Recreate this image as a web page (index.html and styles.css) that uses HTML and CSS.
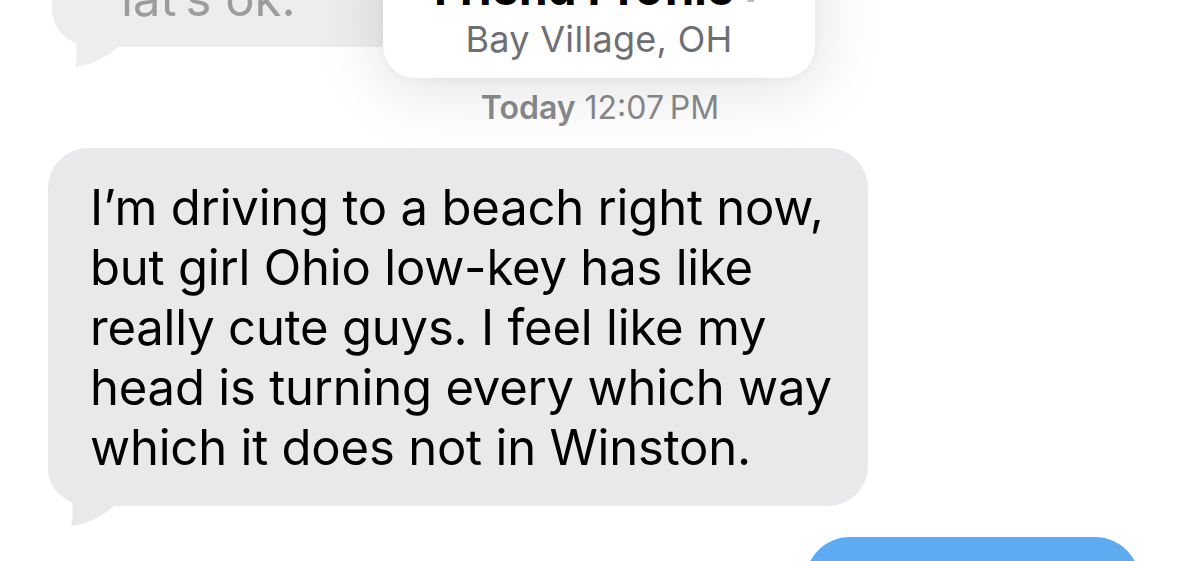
FILE: index.html
```html
<!DOCTYPE html>
<html>
<head>
<meta charset="utf-8">
<link rel="stylesheet" href="styles.css">
</head>
<body>
<div class="screen">
  <div class="thread">
    <div class="bubble received faded">
      <span class="text">that’s ok.</span>
      <svg class="tail" viewBox="0 -60 70 82" width="70" height="82"><path d="M0,-60 L0,-40 C0,-20 10,-10 24,-6 C25,4 25,14 23,20 C40,18 55,10 66,0 L66,-60 Z"/></svg>
    </div>

    <div class="timestamp"><b>Today</b> 12:07&#8201;PM</div>

    <div class="bubble received main">
      <p class="text">I’m driving to a beach right now,<br>but girl Ohio low-key has like<br>really cute guys. I feel like my<br>head is turning every which way<br>which it does not in Winston.</p>
      <svg class="tail" viewBox="0 -60 70 82" width="70" height="82"><path d="M0,-60 L0,-40 C0,-20 10,-10 24,-6 C25,4 25,14 23,20 C40,18 55,10 66,0 L66,-60 Z"/></svg>
    </div>

    <div class="sent-row">
      <div class="bubble sent"></div>
    </div>
  </div>

  <div class="card">
    <div class="card-title">Friend Profile <span class="chev">›</span></div>
    <div class="card-sub">Bay Village, OH</div>
  </div>
</div>
</body>
</html>
```

FILE: styles.css
```css
* { box-sizing: border-box; }
html, body {
  margin: 0;
  padding: 0;
  background: #ffffff;
}
body {
  width: 1200px;
  height: 561px;
  overflow: hidden;
  font-family: "Inter", "Liberation Sans", sans-serif;
}
.screen {
  position: relative;
  width: 1200px;
  height: 561px;
  overflow: hidden;
  background: #ffffff;
}
.thread {
  display: flex;
  flex-direction: column;
  padding: 0 0 0 48px;
}
.bubble {
  position: relative;
  border-radius: 40px;
}
.received {
  background: #e9e9eb;
  color: #000;
}
.tail {
  position: absolute;
  left: 0;
  bottom: -22px;
  fill: #e9e9eb;
  overflow: visible;
}
.faded {
  margin-top: -80px;
  margin-left: 4px;
  width: 460px;
  height: 127px;
  background: #ededee;
  padding: 49px 0 0 36px;
}
.faded .tail { fill: #ededee; }
.faded .text {
  display: block;
  font-size: 49px;
  line-height: 60px;
  color: #9c9c9e;
}
.timestamp {
  align-self: flex-start;
  width: 1104px;
  text-align: center;
  margin-top: 42px;
  font-size: 32px;
  line-height: 38px;
  color: #8a8a8e;
}
.timestamp b { font-weight: 600; }
.main {
  margin-top: 21px;
  width: 820px;
  padding: 30px 0 28px 42px;
}
.main .text {
  margin: 0;
  font-size: 49px;
  line-height: 60px;
  letter-spacing: -0.2px;
  color: #000;
  position: relative;
  z-index: 1;
}
.sent-row {
  display: flex;
  margin-top: 31px;
  padding-left: 757px;
}
.sent {
  width: 335px;
  height: 90px;
  border-radius: 46px;
  background: #5fabf2;
}
.card {
  position: absolute;
  left: 383px;
  top: -60px;
  width: 432px;
  height: 138px;
  background: #ffffff;
  border-radius: 32px;
  box-shadow: 0 8px 70px rgba(0, 0, 0, 0.13), 0 2px 10px rgba(0, 0, 0, 0.04);
  text-align: center;
}
.card-title {
  margin-top: 23px;
  font-size: 46px;
  font-weight: 700;
  line-height: 50px;
  color: #000;
}
.chev {
  color: #b8b8bc;
  font-weight: 600;
}
.card-sub {
  margin-top: 5px;
  font-size: 36px;
  line-height: 42px;
  letter-spacing: 0.3px;
  color: #6e6e73;
}
```
